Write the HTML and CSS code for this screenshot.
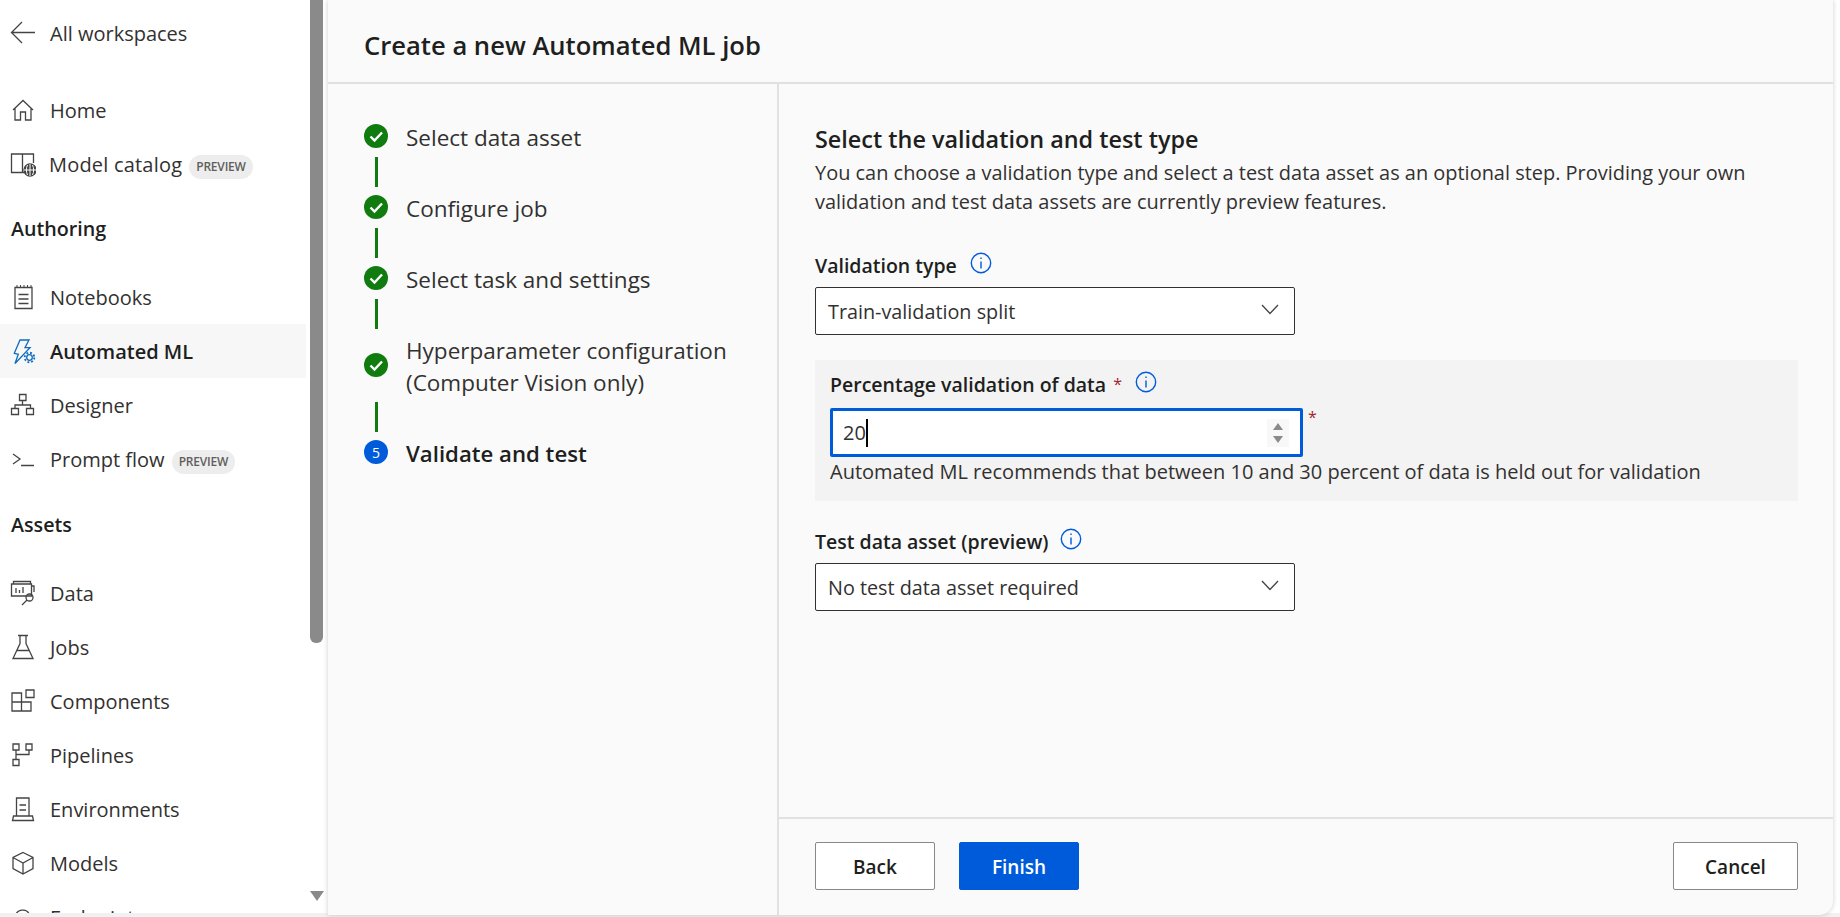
FILE: index.html
```html
<!DOCTYPE html>
<html lang="en">
<head>
  <meta charset="UTF-8">
  <meta name="viewport" content="width=device-width, initial-scale=1.0">
  <title>Create a new Automated ML job</title>
  <link rel="stylesheet" href="styles.css">
</head>
<body>
  <div class="app">
    <!-- Left navigation -->
    <nav class="sidebar">
      <a class="nav-row back-row">
        <svg class="icon" viewBox="0 0 26 26"><path d="M25 12.500H2M12 2 1.500 12.500 12 23"/></svg>
        <span>All workspaces</span>
      </a>
      <a class="nav-row">
        <svg class="icon" viewBox="0 0 26 26"><path d="M3 13 13 3.500 23 13M5 11v12h5.500v-8h5v8H21V11"/></svg>
        <span>Home</span>
      </a>
      <a class="nav-row catalog-row">
        <svg class="icon" viewBox="0 0 26 26"><path d="M14 21.500H1.500V3h11v18M12.500 3h11v9"/><circle cx="20" cy="19" r="6" fill="#444"/><path class="globe-line" d="M20 13v12M14 19h12M17.500 14c-1.500 3-1.500 7 0 10M22.500 14c1.500 3 1.500 7 0 10"/></svg>
        <span class="catalog-text">Model catalog</span>
        <span class="preview-pill">PREVIEW</span>
      </a>

      <h3 class="nav-heading heading-authoring">Authoring</h3>
      <a class="nav-row">
        <svg class="icon" viewBox="0 0 26 26"><path d="M5 3.500h17v21H5zM8.500 10.500h10M8.500 15h10M8.500 19.500h10"/><path d="M7 1v3M10.500 1v3M14 1v3M17.500 1v3M21 1v3" stroke-width="1"/></svg>
        <span>Notebooks</span>
      </a>
      <a class="nav-row nav-row-active">
        <svg class="icon icon-blue" viewBox="0 0 26 26"><path d="M10 2h9l-4 7.700h5L5 25.500l3.300-9.200-4-1z"/><circle cx="19.500" cy="19.500" r="2.800"/><circle class="gear-teeth" cx="19.500" cy="19.500" r="4.800"/></svg>
        <span>Automated ML</span>
      </a>
      <a class="nav-row">
        <svg class="icon" viewBox="0 0 26 26"><path d="M9.500 2.500h6.500v6H9.500zM1.500 16.500h7v6h-7zM16.500 16.500h7v6h-7zM12.500 8.500v4.500M5 16.500V13h15.500v3.500"/></svg>
        <span>Designer</span>
      </a>
      <a class="nav-row">
        <svg class="icon" viewBox="0 0 26 26"><path d="M3 8l7 5-7 5M11 19.500h13"/></svg>
        <span>Prompt flow</span>
        <span class="preview-pill">PREVIEW</span>
      </a>

      <h3 class="nav-heading heading-assets">Assets</h3>
      <a class="nav-row">
        <svg class="icon" viewBox="0 0 26 26"><path d="M3.500 4V1.500h17V4M1.500 4h20v12h-20zM21.500 6h2.500v6M6 8v5M9.500 10v3M13 7v6"/><circle cx="19.500" cy="17.500" r="3.500"/><path d="M17 20l-5 5"/></svg>
        <span>Data</span>
      </a>
      <a class="nav-row">
        <svg class="icon" viewBox="0 0 26 26"><path d="M8 1.500h10M10 1.500v8L3 24.500h20L16 9.500v-8M6.500 16.500h13"/></svg>
        <span>Jobs</span>
      </a>
      <a class="nav-row">
        <svg class="icon" viewBox="0 0 26 26"><path d="M2 5h9.500v18H2zM2 14h19v9h-9.500M11.500 14v-9M16 2h8v7.500h-8z"/></svg>
        <span>Components</span>
      </a>
      <a class="nav-row">
        <svg class="icon" viewBox="0 0 26 26"><path d="M3 2h6v6H3zM16 2h6v6h-6zM3 17.500h6v6H3zM6 8v9.500M6 12.500h13V8"/></svg>
        <span>Pipelines</span>
      </a>
      <a class="nav-row">
        <svg class="icon" viewBox="0 0 26 26"><path d="M6.500 20V2h12.500v18M3.500 20h19l1 4.500h-21zM9.500 9h6.500M9.500 14h6.500"/></svg>
        <span>Environments</span>
      </a>
      <a class="nav-row">
        <svg class="icon" viewBox="0 0 26 26"><path d="M13 2.500 23 7.500v11L13 24 3 18.500v-11zM3 7.500 13 13l10-5.500M13 13v11"/></svg>
        <span>Models</span>
      </a>
      <a class="nav-row">
        <svg class="icon" viewBox="0 0 26 26"><path d="M6 20c-6 0-6-8 0-8 0-7 11-8 13-2 6 0 6 10 0 10z"/></svg>
        <span>Endpoints</span>
      </a>
    </nav>

    <div class="nav-scroll">
      <div class="nav-scroll-thumb"></div>
      <div class="nav-scroll-arrow"></div>
    </div>

    <!-- Wizard panel -->
    <main class="wizard">
      <header class="wizard-header">
        <h1>Create a new Automated ML job</h1>
      </header>

      <div class="wizard-body">
        <ol class="steps">
          <li class="step">
            <span class="step-dot"><svg viewBox="0 0 24 24"><path d="M6.500 12.500 10.500 16.500 18 8.500"/></svg></span>
            <span class="step-label">Select data asset</span>
          </li>
          <li class="step-line"></li>
          <li class="step">
            <span class="step-dot"><svg viewBox="0 0 24 24"><path d="M6.500 12.500 10.500 16.500 18 8.500"/></svg></span>
            <span class="step-label">Configure job</span>
          </li>
          <li class="step-line"></li>
          <li class="step">
            <span class="step-dot"><svg viewBox="0 0 24 24"><path d="M6.500 12.500 10.500 16.500 18 8.500"/></svg></span>
            <span class="step-label">Select task and settings</span>
          </li>
          <li class="step-line"></li>
          <li class="step step-tall">
            <span class="step-dot"><svg viewBox="0 0 24 24"><path d="M6.500 12.500 10.500 16.500 18 8.500"/></svg></span>
            <span class="step-label">Hyperparameter configuration<br>(Computer Vision only)</span>
          </li>
          <li class="step-line"></li>
          <li class="step step-current">
            <span class="step-dot">5</span>
            <span class="step-label">Validate and test</span>
          </li>
        </ol>

        <section class="content">
          <div class="form-area">
            <h2>Select the validation and test type</h2>
            <p class="intro">You can choose a validation type and select a test data asset as an optional step. Providing your own validation and test data assets are currently preview features.</p>

            <div class="field-label label-validation">
              <span>Validation type</span>
              <svg class="info" viewBox="0 0 22 22"><circle cx="11" cy="11" r="9.700"/><path d="M11 9.500v7M11 5.500v1.600"/></svg>
            </div>
            <div class="dropdown">
              <span>Train-validation split</span>
              <svg class="chevron" viewBox="0 0 18 11"><path d="M1 1l8 8.500L17 1"/></svg>
            </div>

            <div class="nested">
              <div class="field-label">
                <span>Percentage validation of data</span>
                <span class="req">*</span>
                <svg class="info" viewBox="0 0 22 22"><circle cx="11" cy="11" r="9.700"/><path d="M11 9.500v7M11 5.500v1.600"/></svg>
              </div>
              <div class="number-row">
                <div class="number-input">
                  <span class="number-value">20</span>
                  <span class="caret"></span>
                  <div class="spin">
                    <span class="spin-up"></span>
                    <span class="spin-down"></span>
                  </div>
                </div>
                <span class="req req-side">*</span>
              </div>
              <p class="hint">Automated ML recommends that between 10 and 30 percent of data is held out for validation</p>
            </div>

            <div class="field-label label-test">
              <span>Test data asset (preview)</span>
              <svg class="info" viewBox="0 0 22 22"><circle cx="11" cy="11" r="9.700"/><path d="M11 9.500v7M11 5.500v1.600"/></svg>
            </div>
            <div class="dropdown">
              <span>No test data asset required</span>
              <svg class="chevron" viewBox="0 0 18 11"><path d="M1 1l8 8.500L17 1"/></svg>
            </div>
          </div>

          <footer class="actions">
            <button class="btn">Back</button>
            <button class="btn btn-primary">Finish</button>
            <button class="btn btn-cancel">Cancel</button>
          </footer>
        </section>
      </div>
    </main>
  </div>
</body>
</html>
```

FILE: styles.css
```css
* {
  box-sizing: border-box;
}

html, body {
  margin: 0;
  height: 100%;
  overflow: hidden;
}

html {
  background-color: #f1f1f1;
}

body {
  font-family: "Open Sans", "Noto Sans", Arial, sans-serif;
  font-size: 20px;
  color: #323130;
}

.app {
  display: flex;
  height: 913px;
  background-color: #fff;
}

/* sidebar */
.sidebar {
  width: 306px;
  flex-shrink: 0;
  padding-top: 6px;
  overflow: hidden;
}

.nav-row {
  display: flex;
  align-items: center;
  height: 54px;
  padding-left: 10px;
  white-space: nowrap;
}

.back-row {
  margin-bottom: 23px;
}

.nav-row .icon {
  width: 26px;
  height: 26px;
  margin-right: 14px;
  flex-shrink: 0;
}

.icon {
  fill: none;
  stroke: #444;
  stroke-width: 1.300;
}

.icon-blue {
  stroke: #0f6cbd;
}

.globe-line {
  stroke: #fff;
  stroke-width: 1;
}

.gear-teeth {
  stroke-width: 1.800;
  stroke-dasharray: 1.900 1.870;
}

.catalog-row .icon {
  margin-right: 13px;
}

.catalog-text {
  letter-spacing: 0.2px;
}

.nav-row-active {
  background-color: #f7f7f7;
  color: #201f1e;
  font-weight: 600;
}

.nav-heading {
  margin: 0;
  height: 40px;
  line-height: 40px;
  padding-left: 11px;
  font-size: 19.700px;
  font-weight: 600;
  color: #201f1e;
}

.heading-authoring {
  margin-top: 18px;
  margin-bottom: 21px;
}

.heading-assets {
  margin-top: 19px;
  margin-bottom: 21px;
}

.preview-pill {
  margin: 5px 0 0 7px;
  padding: 0 7px;
  height: 24px;
  line-height: 24px;
  border-radius: 12px;
  background-color: #ededed;
  color: #605e5c;
  font-size: 12px;
  font-weight: 600;
  letter-spacing: -0.2px;
}

/* sidebar scrollbar */
.nav-scroll {
  width: 22px;
  flex-shrink: 0;
  padding: 0 5px 0 4px;
  display: flex;
  flex-direction: column;
  align-items: center;
}

.nav-scroll-thumb {
  width: 13px;
  height: 643px;
  background-color: #8a8a8a;
  border-radius: 0 0 6px 6px;
}

.nav-scroll-arrow {
  margin-top: 248px;
  width: 0;
  height: 0;
  border-left: 7px solid transparent;
  border-right: 7px solid transparent;
  border-top: 10px solid #8a8a8a;
}

/* wizard */
.wizard {
  width: 1505px;
  height: 915px;
  background-color: #fafafa;
  border-radius: 0 0 14px 0;
  box-shadow: 0 0 5px rgba(0, 0, 0, 0.2);
  display: flex;
  flex-direction: column;
}

.wizard-header {
  height: 84px;
  padding: 0 36px;
  border-bottom: 2px solid #e1e1e1;
  display: flex;
  align-items: center;
}

.wizard-header h1 {
  margin: 8px 0 0;
  font-size: 25.600px;
  font-weight: 600;
  color: #201f1e;
}

.wizard-body {
  flex: 1;
  display: flex;
  min-height: 0;
}

/* steps */
.steps {
  width: 451px;
  flex-shrink: 0;
  list-style: none;
  margin: 0;
  padding: 40px 0 0 36px;
  border-right: 2px solid #e1e1e1;
}

.step {
  display: flex;
  align-items: center;
  min-height: 24px;
}

.step-dot {
  width: 24px;
  height: 24px;
  flex-shrink: 0;
  margin-right: 18px;
  border-radius: 50%;
  background-color: #107c10;
  display: flex;
  align-items: center;
  justify-content: center;
}

.step-dot svg {
  width: 24px;
  height: 24px;
  fill: none;
  stroke: #fff;
  stroke-width: 2.400;
}

.step-label {
  font-size: 22.500px;
  line-height: 32px;
  white-space: nowrap;
  margin: -6px 0;
  padding-top: 4px;
}

.step-line {
  width: 3px;
  height: 30px;
  margin: 9px 0 8px 11px;
  background-color: #107c10;
}

.step-current {
  margin-top: 2px;
}

.step-current .step-dot {
  background-color: #005bdb;
  color: #fff;
  font-size: 14px;
}

.step-current .step-label {
  font-weight: 600;
  font-size: 22.200px;
  color: #201f1e;
}

/* form */
.content {
  flex: 1;
  display: flex;
  flex-direction: column;
  min-width: 0;
}

.form-area {
  flex: 1;
  padding: 39px 35px 0 36px;
}

h2 {
  margin: 0;
  font-size: 23.400px;
  line-height: 32px;
  font-weight: 600;
  color: #201f1e;
}

.intro {
  margin: 3px 0 0;
  font-size: 19.950px;
  line-height: 29px;
}

.field-label {
  display: flex;
  align-items: center;
  height: 32px;
  font-size: 19.500px;
  font-weight: 600;
  color: #201f1e;
  margin-bottom: 6px;
}

.label-validation {
  margin-top: 33px;
}

.label-test {
  margin-top: 24px;
}

.info {
  width: 22px;
  height: 22px;
  margin-left: 13px;
  margin-bottom: 5px;
  fill: none;
  stroke: #005bdb;
  stroke-width: 1.400;
}

.label-test .info {
  margin-left: 11px;
}

.dropdown {
  width: 480px;
  height: 48px;
  padding: 0 12px;
  font-size: 19.800px;
  background-color: #fff;
  border: 1px solid #323130;
  border-radius: 2px;
  display: flex;
  align-items: center;
  justify-content: space-between;
}

.chevron {
  width: 18px;
  height: 11px;
  fill: none;
  stroke: #444;
  stroke-width: 1.300;
  margin-right: 3px;
  margin-bottom: 4px;
}

.nested {
  margin-top: 25px;
  padding: 8px 15px 0;
  height: 141px;
  background-color: #f3f3f3;
}

.nested .field-label {
  margin-bottom: 8px;
}

.req {
  color: #a4262c;
  margin-left: 7px;
  font-weight: 400;
  font-size: 16px;
}

.nested .info {
  margin-left: 13px;
}

.number-row {
  display: flex;
}

.number-input {
  width: 473px;
  height: 49px;
  padding: 0 11px 0 10px;
  background-color: #fff;
  border: 3px solid #005bdb;
  border-radius: 2px;
  display: flex;
  align-items: center;
}

.caret {
  width: 2px;
  height: 28px;
  background-color: #000;
}

.spin {
  margin-left: auto;
  width: 22px;
  height: 28px;
  background-color: #f8f8f8;
  display: flex;
  flex-direction: column;
  align-items: center;
  justify-content: center;
  gap: 6px;
}

.spin-up, .spin-down {
  width: 0;
  height: 0;
  border-left: 5px solid transparent;
  border-right: 5px solid transparent;
}

.spin-up {
  border-bottom: 7px solid #8a8a8a;
}

.spin-down {
  border-top: 7px solid #8a8a8a;
}

.req-side {
  margin-left: 5px;
  padding-top: 2px;
  line-height: 14px;
  height: 14px;
}

.hint {
  margin: 0;
  font-size: 20px;
  line-height: 30px;
}

/* footer */
.actions {
  height: 98px;
  padding: 23px 35px 0 36px;
  border-top: 2px solid #e1e1e1;
  display: flex;
  align-items: flex-start;
  gap: 24px;
}

.btn {
  width: 120px;
  height: 48px;
  padding-top: 3px;
  background-color: #fff;
  border: 1px solid #8a8886;
  border-radius: 2px;
  font-family: inherit;
  font-size: 19px;
  font-weight: 600;
  color: #201f1e;
}

.btn-primary {
  background-color: #005bdb;
  border-color: #005bdb;
  color: #fff;
}

.btn-cancel {
  width: 125px;
  margin-left: auto;
}
```
